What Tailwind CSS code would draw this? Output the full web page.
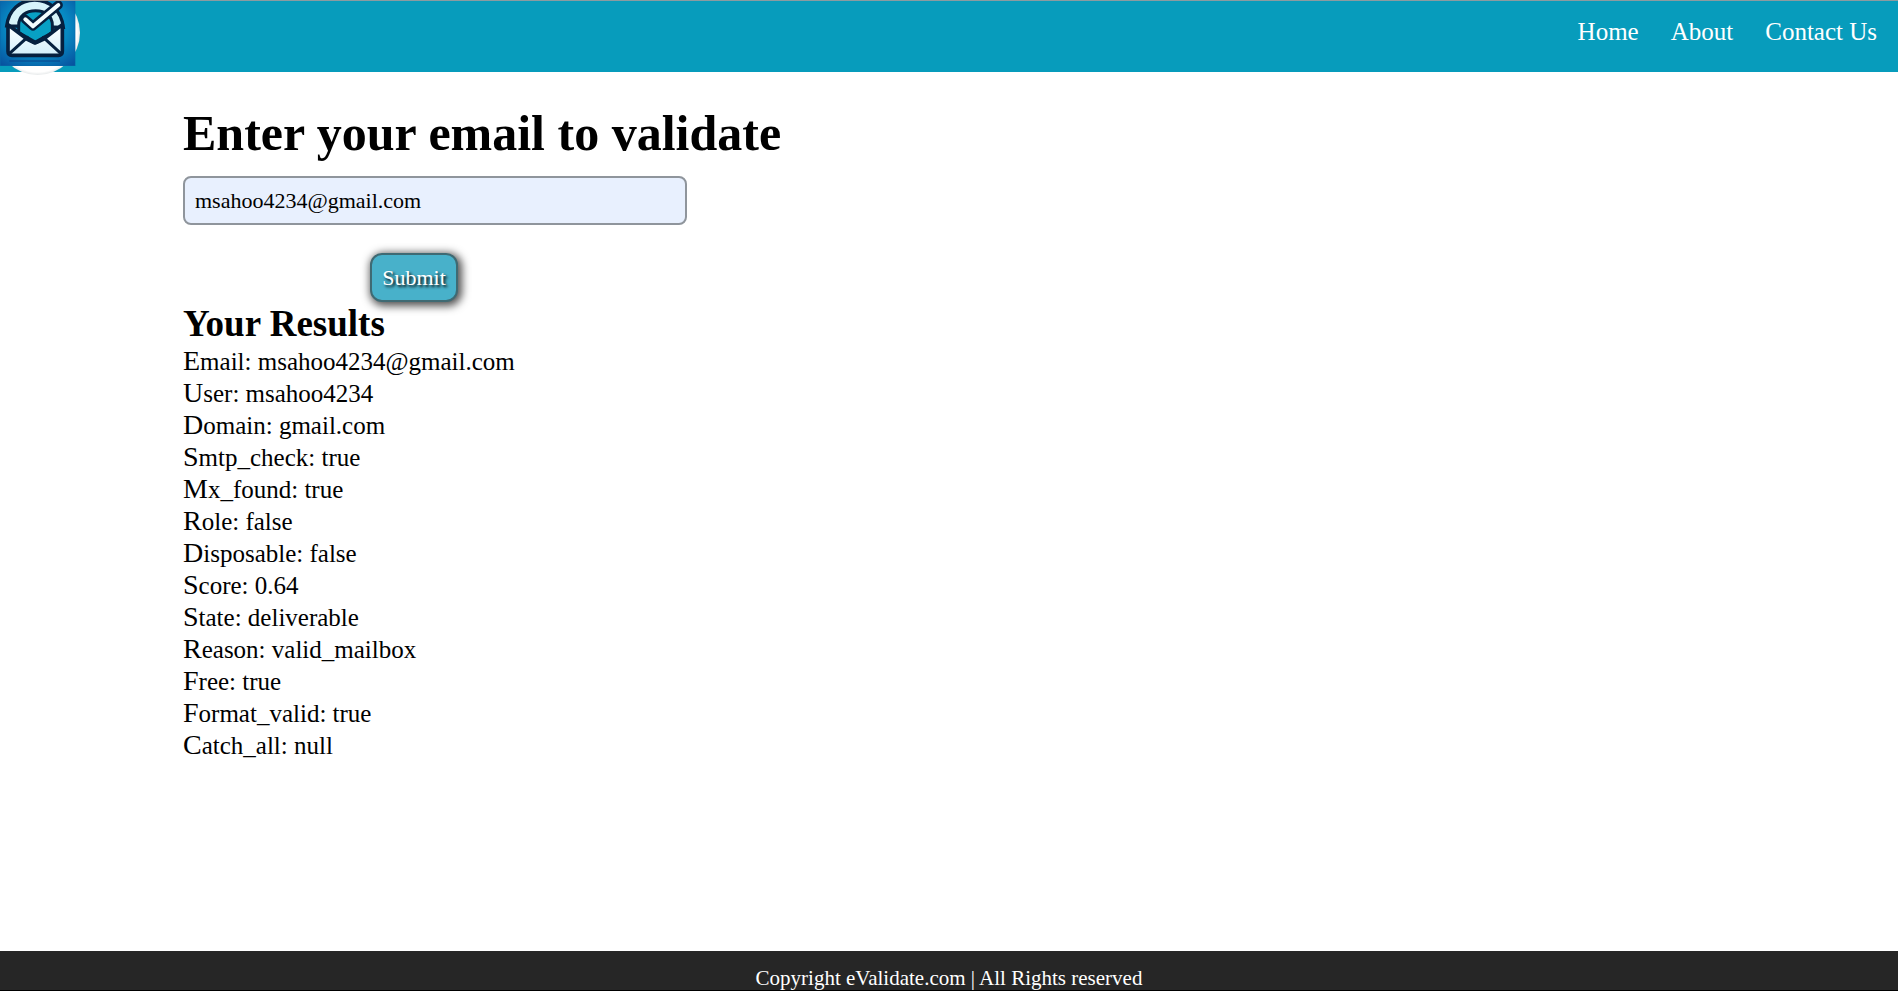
<!DOCTYPE html>
<html lang="en">
<head>
<meta charset="utf-8">
<meta name="viewport" content="width=device-width, initial-scale=1">
<title>eValidate</title>
<script src="https://cdn.jsdelivr.net/npm/@tailwindcss/browser@4"></script>
</head>
<body class="flex min-h-screen flex-col border-y border-t-[#8c9ba0] border-b-black bg-white font-['Liberation_Serif',serif] text-black">
<header class="flex h-[71px] items-start justify-between bg-[#079cbc]">
  <a href="#" aria-label="eValidate home" class="block">
    <svg class="block h-[78px] w-[84px]" viewBox="0 3 252 234" fill="none">
      <defs>
        <radialGradient id="bg" cx="0.5" cy="0.4" r="0.75"><stop offset="0" stop-color="#0fb4d6"/><stop offset="0.55" stop-color="#0788c2"/><stop offset="1" stop-color="#07529f"/></radialGradient>
        <linearGradient id="paper" x1="0" y1="0" x2="0" y2="1"><stop offset="0" stop-color="#fff"/><stop offset="1" stop-color="#d3effb"/></linearGradient>
        <radialGradient id="disc"><stop offset="0.93" stop-color="#fff"/><stop offset="1" stop-color="#e6e9ea"/></radialGradient>
        <filter id="soft"><feGaussianBlur stdDeviation="2"/></filter>
        <clipPath id="tile"><path d="M0 3H226V198H0Z"/></clipPath>
      </defs>
      <circle cx="113" cy="98" r="127" fill="url(#disc)" filter="url(#soft)"/>
      <g clip-path="url(#tile)">
        <path d="M0 3H226V198H0Z" fill="url(#bg)"/>
        <path d="M20 78C26 30 60 0 104 0s80 30 86 82z" fill="#d6f3fa" stroke="#06203f" stroke-width="10"/>
        <path d="M56 98V76C56 48 78 32 107 32s50 16 50 44v22l-51 28z" fill="#08a0c4" stroke="#06203f" stroke-width="9"/>
        <path d="M24 74L82 118L105 129L130 118L187 74V154q0 12-12 12H36q-12 0-12-12z" fill="url(#paper)" stroke="#06203f" stroke-width="11" stroke-linejoin="round"/>
        <path d="M28 161L82 112M183 161L130 112M82 116l18 11q5 3 10 0l20-11" stroke="#06203f" stroke-width="9" stroke-linecap="round"/>
        <path d="M76 58L99 78L175 15" stroke="#06203f" stroke-width="27" stroke-linecap="round" stroke-linejoin="round"/>
        <path d="M76 58L99 79L175 15" stroke="#f4fdff" stroke-width="12" stroke-linecap="round" stroke-linejoin="round"/>
        <path d="M28 183H180" stroke="#0a4389" stroke-width="3"/>
        <path d="M0 3V198H226V3" stroke="#0868a8" stroke-width="3"/>
      </g>
    </svg>
  </a>
  <nav class="flex gap-8 pt-4 pr-[21px] text-[25px] leading-[30px] text-white">
    <a href="#">Home</a>
    <a href="#">About</a>
    <a href="#">Contact Us</a>
  </nav>
</header>
<main class="flex-1 px-[183px] pt-8">
  <form>
    <h1 class="text-[50px] leading-[58px] font-bold"><label for="email">Enter your email to validate</label></h1>
    <input id="email" type="email" value="msahoo4234@gmail.com" class="mt-[14px] block h-[49px] w-[504px] rounded-lg border-2 border-[#8f959c] bg-[#e8f0fe] px-[10px] text-[22px]">
    <button type="submit" class="mt-7 ml-[187px] block h-[49px] w-[88px] rounded-xl border-2 border-[#3f6a73] bg-[#48b1ca] text-[22px] text-white shadow-[2px_2px_8px_2px_#000000b0] text-shadow-[2px_2px_3px_#000000]">Submit</button>
  </form>
  <section>
    <h2 class="text-[37px] leading-[44px] font-bold">Your Results</h2>
    <div class="text-[25px] leading-8">
      <p class="first-letter:text-[28px] first-letter:leading-none">Email: msahoo4234@gmail.com</p>
      <p class="first-letter:text-[28px] first-letter:leading-none">User: msahoo4234</p>
      <p class="first-letter:text-[28px] first-letter:leading-none">Domain: gmail.com</p>
      <p class="first-letter:text-[28px] first-letter:leading-none">Smtp_check: true</p>
      <p class="first-letter:text-[28px] first-letter:leading-none">Mx_found: true</p>
      <p class="first-letter:text-[28px] first-letter:leading-none">Role: false</p>
      <p class="first-letter:text-[28px] first-letter:leading-none">Disposable: false</p>
      <p class="first-letter:text-[28px] first-letter:leading-none">Score: 0.64</p>
      <p class="first-letter:text-[28px] first-letter:leading-none">State: deliverable</p>
      <p class="first-letter:text-[28px] first-letter:leading-none">Reason: valid_mailbox</p>
      <p class="first-letter:text-[28px] first-letter:leading-none">Free: true</p>
      <p class="first-letter:text-[28px] first-letter:leading-none">Format_valid: true</p>
      <p class="first-letter:text-[28px] first-letter:leading-none">Catch_all: null</p>
    </div>
  </section>
</main>
<footer class="bg-[#262626] pt-4 text-center text-[21px] leading-[23px] text-white">Copyright eValidate.com | All Rights reserved</footer>
</body>
</html>
